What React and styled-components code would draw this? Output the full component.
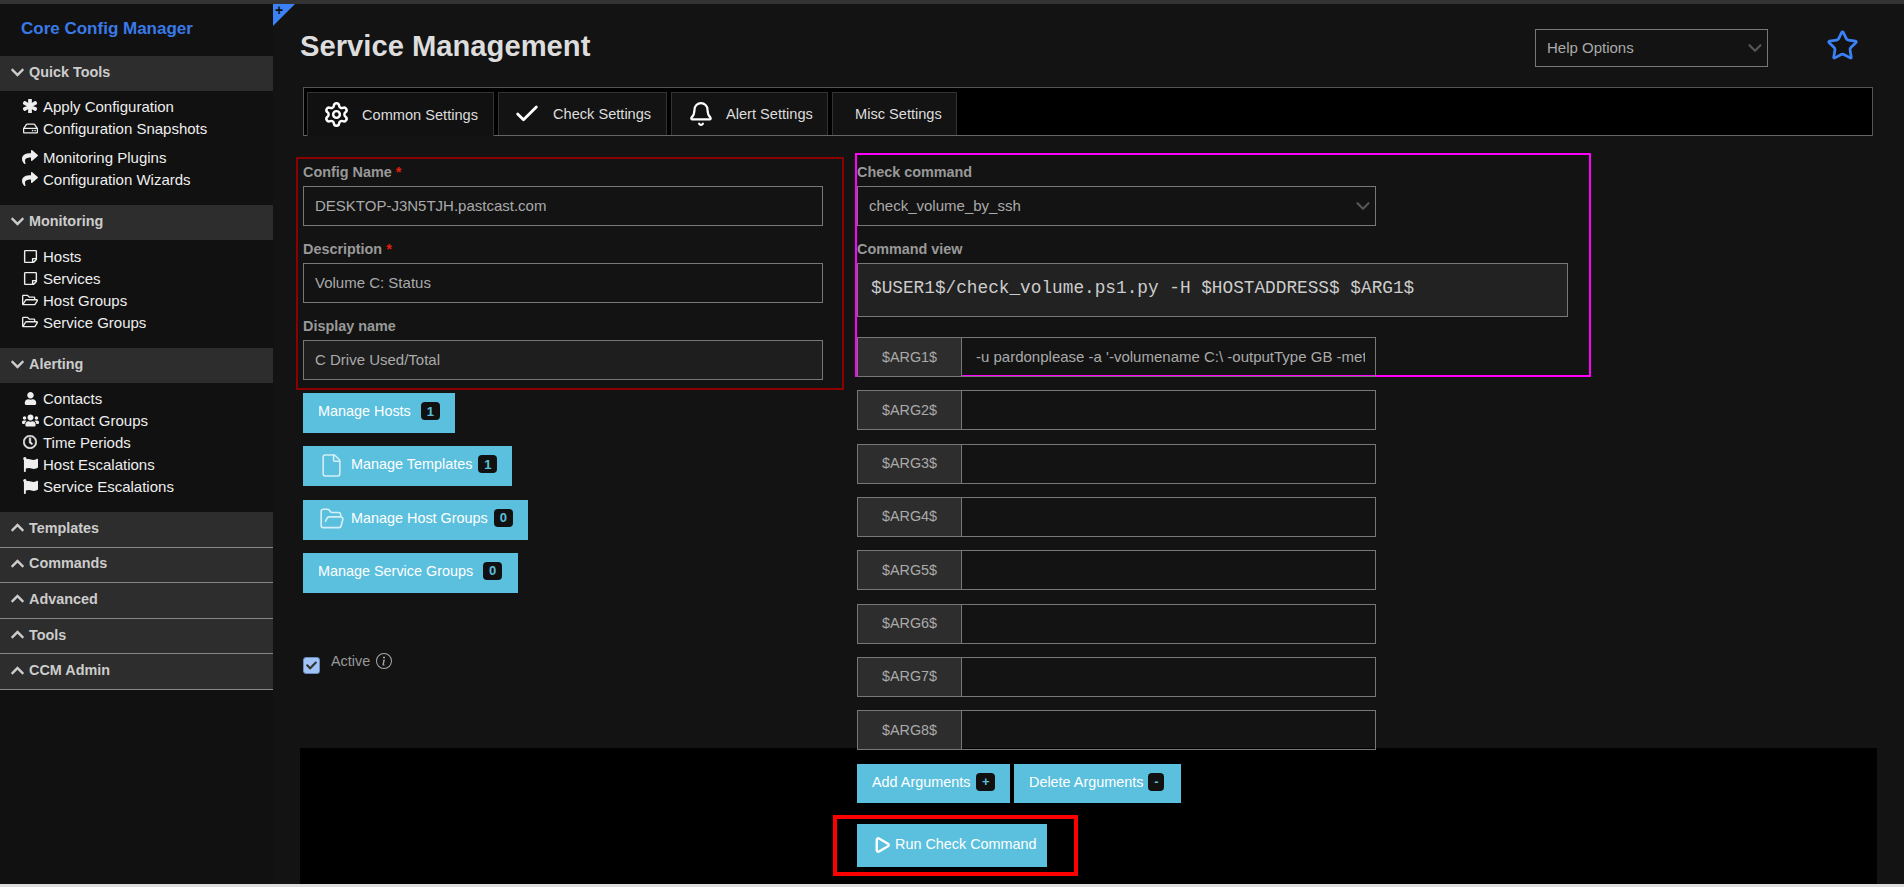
import React from 'react';
import styled, { createGlobalStyle } from 'styled-components';
import { FaAsterisk, FaCheck, FaChevronDown, FaChevronUp, FaFlag, FaRegClock, FaRegFolderOpen, FaRegHdd, FaRegStickyNote, FaShare, FaUser, FaUsers } from 'react-icons/fa';
import { BsInfoCircle } from 'react-icons/bs';
import { Bell, Check, ChevronDown, File, FolderOpen, Play, Settings, Star } from 'lucide-react';

const GlobalStyle = createGlobalStyle`
    html, body {
        margin: 0;
        padding: 0;
        height: 100%;
        overflow: hidden;
        background: #131313;
        font-family: "Liberation Sans", Arial, sans-serif;
    }
    * { box-sizing: border-box; }
`;

const Page = styled.div`
    height: 100vh;
    display: flex;
    flex-direction: column;
    position: relative;
`;

const TopStrip = styled.div`
    height: 4px;
    background: #333;
`;

const BottomStrip = styled.div`
    height: 3px;
    background: #ddd;
`;

const Body = styled.div`
    flex: 1;
    display: flex;
    min-height: 0;
`;

const Sidebar = styled.nav`
    width: 273px;
    flex: none;
    background: #111;
`;

const Brand = styled.div`
    height: 52px;
    padding: 16px 0 0 21px;
    font-size: 17px;
    line-height: 18px;
    font-weight: 700;
    color: #3a7ae8;
`;

const GroupHeader = styled.div`
    height: ${p => (p.$open ? '35px' : '35.6px')};
    display: flex;
    align-items: center;
    gap: 4px;
    padding: 0 0 3px 10px;
    background: #2d2d2d;
    color: #ccc;
    font-size: 14.4px;
    font-weight: 700;
    border-bottom: ${p => (p.$open ? 'none' : '1px solid #888')};
    svg { font-size: 15px; }
`;

const ItemList = styled.ul`
    list-style: none;
    margin: 0;
    padding: ${p => p.$top || '5px'} 0 14px 20px;
`;

const Item = styled.li`
    height: 22px;
    display: flex;
    align-items: center;
    padding-bottom: 2px;
    color: #eee;
    font-size: 15px;
    margin-top: ${p => (p.$spaced ? '7px' : '0')};
`;

const ItemIcon = styled.span`
    width: 20px;
    margin-right: 3px;
    display: flex;
    justify-content: center;
    font-size: ${p => p.$size || '15px'};
`;

const Main = styled.main`
    flex: 1;
    min-width: 0;
    padding-left: 27px;
    position: relative;
`;

const Corner = styled.div`
    position: absolute;
    left: 0;
    top: 0;
    width: 22px;
    height: 22px;
    background: #3b82f6;
    clip-path: polygon(0 0, 100% 0, 0 100%);
    color: #111;
    font-size: 14px;
    line-height: 12px;
    padding-left: 2px;
    font-weight: 700;
`;

const TitleRow = styled.header`
    height: 83px;
    display: flex;
    align-items: flex-start;
    justify-content: space-between;
    padding-right: 45px;
`;

const Title = styled.h1`
    margin: 24px 0 0;
    font-size: 29.2px;
    line-height: 36px;
    font-weight: 700;
    color: #ddd;
`;

const TitleTools = styled.div`
    display: flex;
    align-items: center;
    gap: 58px;
    padding-top: 25px;
`;

const FavStar = styled(Star)`
    color: #3b82f6;
    margin-top: -6px;
`;

const Select = styled.div`
    width: ${p => p.$width};
    height: ${p => p.$height || '40px'};
    border: 1px solid #777;
    padding: 0 1px 0 11px;
    display: flex;
    align-items: center;
    justify-content: space-between;
    color: #aaa;
    font-size: 15px;
    span { margin-top: -2px; }
    svg { color: #555; }
`;

const Tabs = styled.div`
    margin: 0 31px 0 3px;
    height: 49px;
    background: #000;
    border: 1px solid #555;
    border-bottom-color: #666;
    padding: 4px 0 0 3px;
    display: flex;
    gap: 4px;
`;

const Tab = styled.div`
    width: ${p => p.$width};
    height: ${p => (p.$active ? '44px' : '43px')};
    background: ${p => (p.$active ? '#111' : '#131313')};
    border: 1px solid #333;
    border-bottom: none;
    display: flex;
    align-items: center;
    padding-left: ${p => p.$pad};
    gap: 12px;
    color: #ddd;
    font-size: 14.6px;
    svg { flex: none; color: #fff; }
`;

const Columns = styled.div`
    height: 612px;
    padding: 27px 0 0 3px;
    display: flex;
    gap: 34px;
`;

const LeftColumn = styled.div`
    width: 520px;
    position: relative;
`;

const RightColumn = styled.div`
    width: 711px;
    position: relative;
`;

const Annotation = styled.div`
    position: absolute;
    pointer-events: none;
    border: 2px solid ${p => p.$color};
    left: ${p => p.$left};
    top: ${p => p.$top};
    width: ${p => p.$width};
    height: ${p => p.$height};
`;

const Field = styled.div`
    margin-bottom: ${p => (p.$last ? '13px' : '14px')};
`;

const Label = styled.label`
    display: block;
    height: 23px;
    line-height: 18px;
    color: #999;
    font-size: 14.4px;
    font-weight: 700;
    span { color: #e02010; }
`;

const Input = styled.div`
    height: 40px;
    border: 1px solid #777;
    padding: 0 11px 2px;
    display: flex;
    align-items: center;
    color: #aaa;
    font-size: 15px;
    background: ${p => (p.$filled ? '#1e1e1e' : 'transparent')};
`;

const CommandView = styled.div`
    height: 54px;
    background: #222;
    border: 1px solid #777;
    padding: 14px 13px 0;
    color: #ccc;
    font-family: "Liberation Mono", monospace;
    font-size: 17.75px;
    line-height: 20px;
    margin-bottom: 20px;
`;

const ArgRow = styled.div`
    position: relative;
    width: 519px;
    height: 40px;
    display: flex;
    border: 1px solid #777;
    margin-bottom: 13.33px;
    color: #aaa;
`;

const ArgName = styled.div`
    width: 104px;
    flex: none;
    background: #2d2d2d;
    border-right: 1px solid #777;
    padding-bottom: 1px;
    font-size: 14.4px;
    display: flex;
    align-items: center;
    justify-content: center;
`;

const ArgValue = styled.div`
    flex: 1;
    min-width: 0;
    margin-right: 10px;
    padding-left: 14px;
    font-size: 15px;
    line-height: 38px;
    white-space: nowrap;
    overflow: hidden;
`;

const ManageList = styled.div`
    display: flex;
    flex-direction: column;
    align-items: flex-start;
    gap: 13.33px;
`;

const Button = styled.div`
    width: ${p => p.$width};
    height: ${p => p.$height || '40px'};
    flex: none;
    background: #5bc0de;
    color: #fff;
    font-size: 14.4px;
    display: flex;
    align-items: center;
    padding-left: ${p => p.$pad || '15px'};
    padding-bottom: 4px;
    svg {
        flex: none;
        color: ${p => p.$iconColor || '#fff'};
        margin: 3px ${p => p.$iconGap || '0'} 0 0;
    }
`;

const Badge = styled.span`
    margin-left: ${p => p.$gap || '9px'};
    min-width: ${p => p.$min || '19px'};
    height: 18px;
    padding: 0 5px;
    border-radius: 4px;
    background: #111;
    color: #5bc0de;
    font-size: 13px;
    font-weight: 700;
    display: inline-flex;
    align-items: center;
    justify-content: center;
`;

const ActiveRow = styled.div`
    margin-top: 60px;
    display: flex;
    align-items: flex-start;
    color: #999;
    font-size: 14.4px;
    svg { margin-left: 6px; color: #aaa; font-size: 16px; }
`;

const Checkbox = styled.span`
    width: 17px;
    height: 17px;
    margin: 4px 11px 0 0;
    border-radius: 3px;
    border: 1px solid #6c8ab8;
    background: #a0c4f8;
    display: flex;
    align-items: center;
    justify-content: center;
    svg { margin: 0; color: #333; font-size: 11px; }
`;

const ActiveText = styled.span`
    display: flex;
    align-items: center;
`;

const ActionBar = styled.div`
    height: 136px;
    background: #000;
    margin-right: 27px;
    padding: 16px 0 0 557px;
`;

const ActionRow = styled.div`
    display: flex;
    gap: 4px;
`;

const RunWrap = styled.div`
    position: relative;
    width: 190px;
    margin-top: 21px;
`;

const RunMark = styled.div`
    position: absolute;
    inset: -9px -31px -9px -24px;
    border: 4px solid #f00;
`;

const items = {
    quick: [
        [<FaAsterisk stroke="currentColor" strokeWidth={50} />, 'Apply Configuration', false, '14px'],
        [<FaRegHdd />, 'Configuration Snapshots'],
        [<FaShare />, 'Monitoring Plugins', true, '16px'],
        [<FaShare />, 'Configuration Wizards', false, '16px'],
    ],
    monitoring: [
        [<FaRegStickyNote />, 'Hosts'],
        [<FaRegStickyNote />, 'Services'],
        [<FaRegFolderOpen />, 'Host Groups', false, '16px'],
        [<FaRegFolderOpen />, 'Service Groups', false, '16px'],
    ],
    alerting: [
        [<FaUser />, 'Contacts', false, '13px'],
        [<FaUsers />, 'Contact Groups', false, '17px'],
        [<FaRegClock stroke="currentColor" strokeWidth={20} />, 'Time Periods', false, '14px'],
        [<FaFlag />, 'Host Escalations'],
        [<FaFlag />, 'Service Escalations'],
    ],
};

const Group = ({ title, list, top }) => (
    <>
        <GroupHeader $open><FaChevronDown />{title}</GroupHeader>
        <ItemList $top={top}>
            {list.map(([icon, label, spaced, size]) => (
                <Item key={label} $spaced={spaced}><ItemIcon $size={size}>{icon}</ItemIcon>{label}</Item>
            ))}
        </ItemList>
    </>
);

const args = ['$ARG2$', '$ARG3$', '$ARG4$', '$ARG5$', '$ARG6$', '$ARG7$', '$ARG8$'];

const App = () => (
    <Page>
        <GlobalStyle />
        <TopStrip />
        <Body>
            <Sidebar>
                <Brand>Core Config Manager</Brand>
                <Group title="Quick Tools" list={items.quick} />
                <Group title="Monitoring" list={items.monitoring} top="6px" />
                <Group title="Alerting" list={items.alerting} />
                {['Templates', 'Commands', 'Advanced', 'Tools', 'CCM Admin'].map(t => (
                    <GroupHeader key={t}><FaChevronUp />{t}</GroupHeader>
                ))}
            </Sidebar>
            <Main>
                <Corner>+</Corner>
                <TitleRow>
                    <Title>Service Management</Title>
                    <TitleTools>
                        <Select $width="233px" $height="38px"><span>Help Options</span><ChevronDown size={22} strokeWidth={2.4} /></Select>
                        <FavStar size={33} strokeWidth={2} />
                    </TitleTools>
                </TitleRow>
                <Tabs>
                    <Tab $active $width="187px" $pad="15px"><Settings size={27} strokeWidth={2.2} />Common Settings</Tab>
                    <Tab $width="169px" $pad="14px"><Check size={28} strokeWidth={2.4} />Check Settings</Tab>
                    <Tab $width="157px" $pad="16px"><Bell size={26} strokeWidth={2} />Alert Settings</Tab>
                    <Tab $width="125px" $pad="22px">Misc Settings</Tab>
                </Tabs>
                <Columns>
                    <LeftColumn>
                        <Annotation $color="#8b0000" $left="-7px" $top="-6px" $width="548px" $height="233px" />
                        <Field><Label>Config Name <span>*</span></Label><Input>DESKTOP-J3N5TJH.pastcast.com</Input></Field>
                        <Field><Label>Description <span>*</span></Label><Input>Volume C: Status</Input></Field>
                        <Field $last><Label>Display name</Label><Input $filled>C Drive Used/Total</Input></Field>
                        <ManageList>
                            <Button $width="152px">Manage Hosts<Badge $gap="10px">1</Badge></Button>
                            <Button $width="209px" $pad="16px" $iconGap="7px" $iconColor="#d4eff7"><File size={25} strokeWidth={1.5} />Manage Templates<Badge $gap="6px">1</Badge></Button>
                            <Button $width="225px" $pad="16px" $iconGap="6px" $iconColor="#d4eff7"><FolderOpen size={26} strokeWidth={1.5} />Manage Host Groups<Badge $gap="6px">0</Badge></Button>
                            <Button $width="215px">Manage Service Groups<Badge $gap="10px">0</Badge></Button>
                        </ManageList>
                        <ActiveRow>
                            <Checkbox><FaCheck /></Checkbox>
                            <ActiveText>Active<BsInfoCircle /></ActiveText>
                        </ActiveRow>
                    </LeftColumn>
                    <RightColumn>
                        <Annotation $color="#f0f" $left="-2px" $top="-10px" $width="736px" $height="224px" />
                        <Field><Label>Check command</Label><Select $width="519px"><span>check_volume_by_ssh</span><ChevronDown size={22} strokeWidth={2.4} /></Select></Field>
                        <Label>Command view</Label>
                        <CommandView>$USER1$/check_volume.ps1.py -H $HOSTADDRESS$ $ARG1$</CommandView>
                        <ArgRow>
                            <ArgName>$ARG1$</ArgName>
                            <ArgValue>-u pardonplease -a '-volumename C:\ -outputType GB -met</ArgValue>
                        </ArgRow>
                        {args.map(a => (
                            <ArgRow key={a}><ArgName>{a}</ArgName><ArgValue /></ArgRow>
                        ))}
                    </RightColumn>
                </Columns>
                <ActionBar>
                    <ActionRow>
                        <Button $width="153px" $height="39px">Add Arguments<Badge $gap="6px">+</Badge></Button>
                        <Button $width="167px" $height="39px">Delete Arguments<Badge $gap="5px" $min="16px">-</Badge></Button>
                    </ActionRow>
                    <RunWrap>
                        <RunMark />
                        <Button $width="190px" $height="43px" $pad="16px" $iconGap="4px"><Play size={18} strokeWidth={3.2} />Run Check Command</Button>
                    </RunWrap>
                </ActionBar>
            </Main>
        </Body>
        <BottomStrip />
    </Page>
);

export default App;
